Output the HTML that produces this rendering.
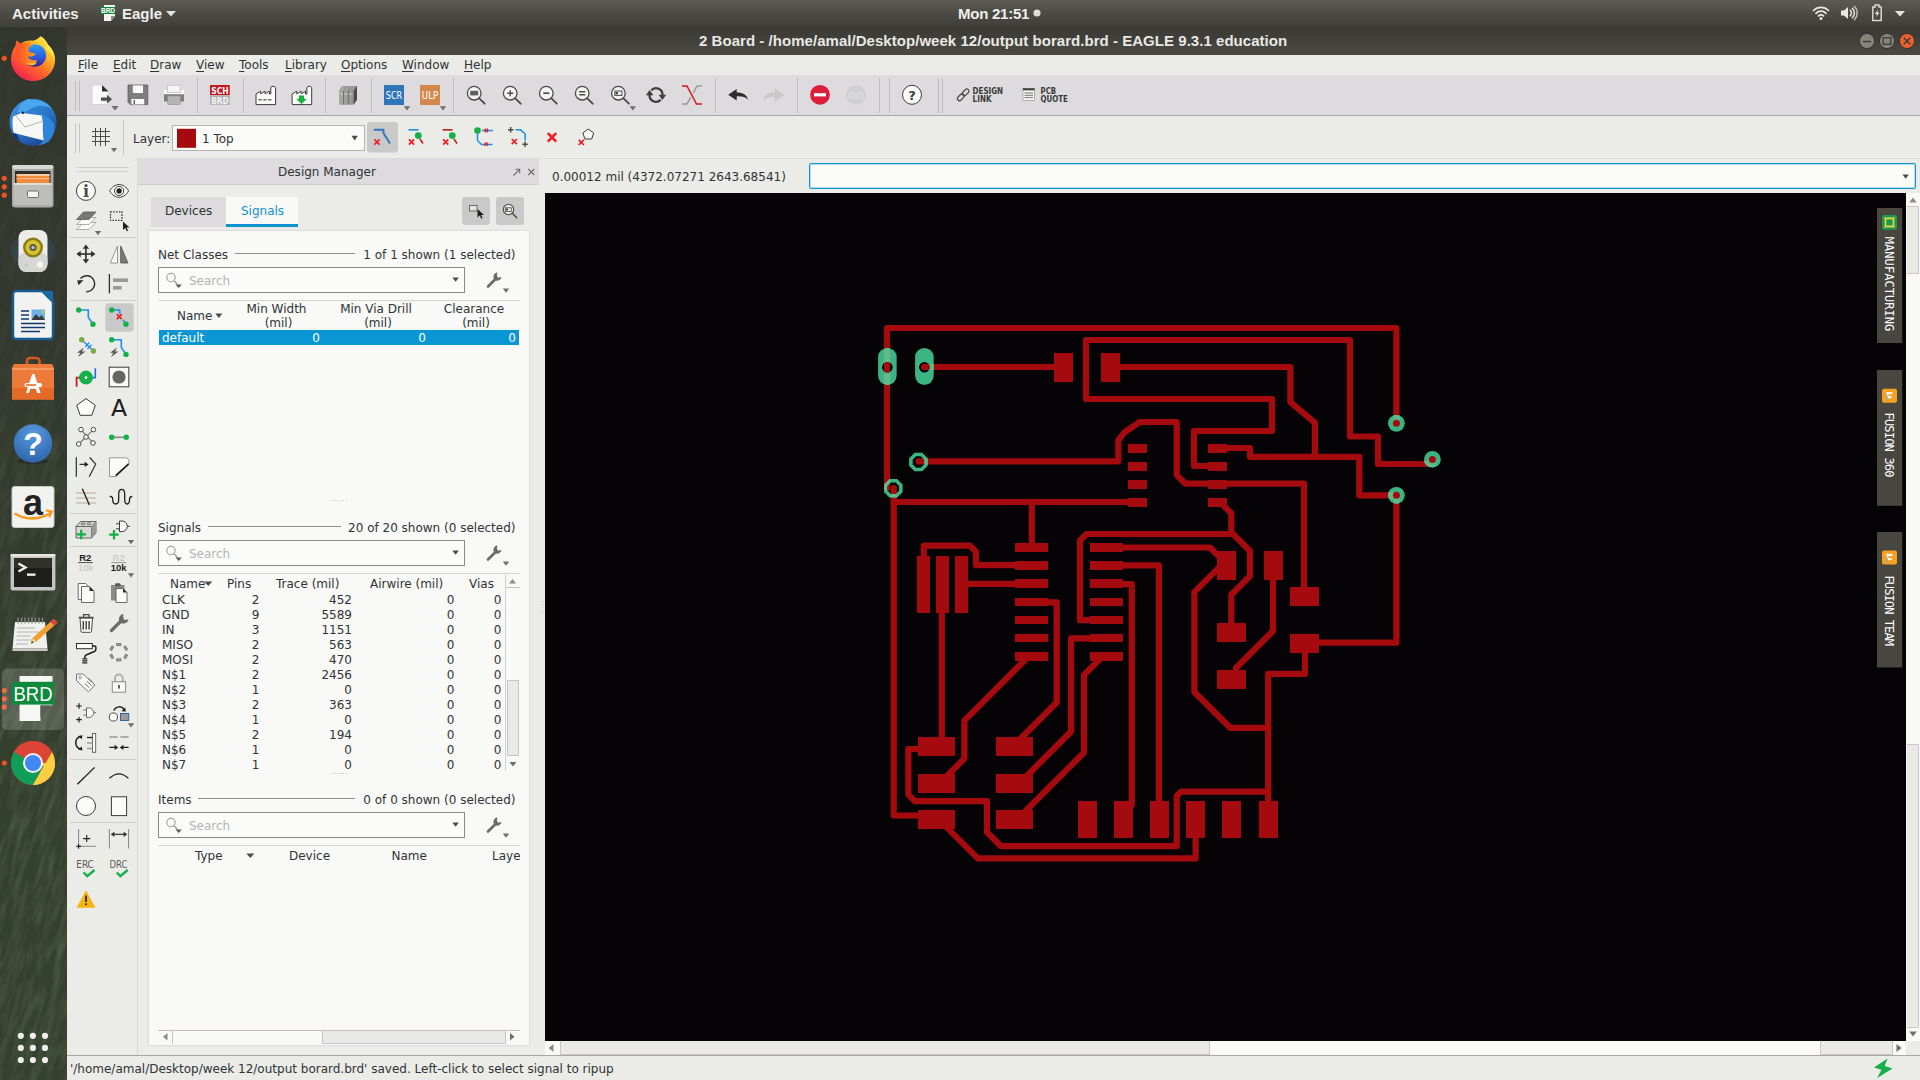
<!DOCTYPE html>
<html lang="en"><head><meta charset="utf-8"><title>2 Board - EAGLE</title>
<style>
*{box-sizing:border-box;margin:0;padding:0}
html,body{width:1920px;height:1080px;overflow:hidden;background:#ebebe7}
body{position:relative;font-family:"DejaVu Sans","Liberation Sans",sans-serif;font-size:12px;color:#2e3436;line-height:1}
.abs{position:absolute}
.t{position:absolute;white-space:nowrap}
svg{position:absolute;overflow:visible}
#topbar{left:0;top:0;width:1920px;height:27px;background:linear-gradient(#5b5a52 0,#55544c 6px,#4c4b44 13px,#45443e 20px,#403f3a 27px);color:#eeeeec;font-family:"DejaVu Sans","Liberation Sans",sans-serif;font-weight:bold;font-size:14px}
#titlebar{left:67px;top:27px;width:1853px;height:27.5px;background:linear-gradient(#3b3a36 0,#3f3e39 10px,#46453f 20px,#4a4943 28px);color:#e8e8e4;font-weight:bold;font-size:14px}
#dock{left:0;top:27px;width:67px;height:1053px;background:#343a2e;overflow:hidden}
#menubar{left:67px;top:54.5px;width:1853px;height:20.5px;background:#ebebe7}
#menubar span{position:absolute}
#menubar u{text-decoration:underline;text-underline-offset:2px}
#tb1{left:67px;top:75px;width:1853px;height:41px;background:#dddbde;border-bottom:1px solid #a9a8aa}
#tb2{left:67px;top:116px;width:1853px;height:42px;background:#ebebe7}
#tools{left:67px;top:158px;width:71px;height:897px;background:#ebebe7;border-right:1px solid #d9d8da}
#dm{left:138px;top:158px;width:401px;height:897px;background:#ebebe7}
#dmhead{left:0;top:0;width:401px;height:26px;background:#dddbde;border-bottom:1px solid #cfcdd0}
#dmpanel{left:10px;top:72px;width:381px;height:817px;background:#f9f9f7;border:1px solid #dddbde}
#cv{left:545px;top:193px;width:1361px;height:848px;background:#050305;overflow:hidden}
#status{left:67px;top:1055px;width:1853px;height:25px;background:#ebebe7;border-top:1px solid #a9a8a6}
.vsep{position:absolute;width:1px;background:#c4c2c5}
.hdr{position:absolute;color:#2e3436}
.num{position:absolute;text-align:right}
</style></head><body>
<div id="topbar" class="abs">
<span class="t" style="left:12px;top:5px;font:bold 15px 'Liberation Sans',sans-serif">Activities</span>
<svg style="left:101px;top:4px" width="16" height="18" viewBox="0 0 16 18"><path d="M3 1h11v11l-4 5H3z" fill="#f4f4f2"/><path d="M10 17v-5h4z" fill="#8c8c88"/><rect x="0" y="3" width="14" height="7" fill="#0d8a3c"/><text x="7" y="9.2" font-size="6.5" font-weight="bold" fill="#fff" text-anchor="middle" font-family="Liberation Sans,sans-serif">BRD</text></svg>
<span class="t" style="left:122px;top:5px;font:bold 15px 'Liberation Sans',sans-serif">Eagle</span>
<svg style="left:166px;top:11px" width="10" height="6"><path d="M0 0h10L5 5.5z" fill="#e4e4e0"/></svg>
<span class="t" style="left:958px;top:4.5px;font:bold 15px 'Liberation Sans',sans-serif;letter-spacing:-.25px">Mon 21:51</span>
<svg style="left:1033px;top:9px" width="8" height="8"><circle cx="4" cy="4" r="3.6" fill="#deded9"/></svg>
<svg style="left:1811px;top:5px" width="20" height="16" viewBox="0 0 20 16"><g fill="none" stroke="#e8e8e4" stroke-width="1.7" stroke-linecap="round"><path d="M2.5 5.5a10.5 10.5 0 0 1 15 0"/><path d="M5 8.3a7 7 0 0 1 10 0"/><path d="M7.4 11a3.6 3.6 0 0 1 5.2 0"/></g><circle cx="10" cy="13.6" r="1.5" fill="#e8e8e4"/></svg>
<svg style="left:1840px;top:5px" width="18" height="16" viewBox="0 0 18 16"><path d="M1 5.5h3L8 2v12L4 10.5H1z" fill="#e8e8e4"/><g fill="none" stroke="#e8e8e4" stroke-width="1.5" stroke-linecap="round"><path d="M10.2 5.3a3.6 3.6 0 0 1 0 5.4"/><path d="M12.3 3.2a6.6 6.6 0 0 1 0 9.6"/><path d="M14.4 1.3a9.4 9.4 0 0 1 0 13.4" opacity=".75"/></g></svg>
<svg style="left:1871px;top:4px" width="12" height="18" viewBox="0 0 12 18"><path d="M4 1h4v2h2.2v13.5H1.8V3H4z" fill="none" stroke="#d8d8d3" stroke-width="1.5"/><path d="M7.2 5.2 3.8 10h2.2l-1 3.6L8.4 8.6H6.2z" fill="#e8e8e4"/></svg>
<svg style="left:1895px;top:11px" width="10" height="6"><path d="M0 0h10L5 5.5z" fill="#e4e4e0"/></svg>
</div>

<div id="dock" class="abs" style="background:linear-gradient(#32362d 0,#33382e 300px,#333a2e 480px,#343d2e 600px,#34402e 800px,#35412f 1053px)">
<svg style="left:0;top:0" width="67" height="1053" viewBox="0 27 67 1053">
<defs><filter id="grass" x="0" y="0" width="100%" height="100%"><feTurbulence type="fractalNoise" baseFrequency="0.16 0.03" numOctaves="3" seed="7"/><feColorMatrix type="matrix" values="0 0 0 0 0.27  0 0 0 0 0.36  0 0 0 0 0.21  1.5 0 0 0 -0.55"/></filter>
<linearGradient id="gfade" x1="0" y1="0" x2="0" y2="1"><stop offset="0" stop-color="#fff" stop-opacity=".12"/><stop offset=".35" stop-color="#fff" stop-opacity=".35"/><stop offset=".55" stop-color="#fff" stop-opacity="1"/><stop offset="1" stop-color="#fff" stop-opacity="1"/></linearGradient><mask id="gm"><rect x="-200" y="-200" width="1600" height="1600" fill="url(#gfade)" transform="rotate(-18 33 550)"/></mask></defs>
<g mask="url(#gm)"><rect x="-300" y="-100" width="700" height="1400" filter="url(#grass)" transform="rotate(18 33 550)" opacity=".34"/></g>
<g fill="#e95420"><circle cx="4.3" cy="58.3" r="2.6"/><circle cx="4.3" cy="178.3" r="2.6"/><circle cx="4.3" cy="186.8" r="2.6"/><circle cx="4.3" cy="195.2" r="2.6"/><circle cx="4.3" cy="690.6" r="2.6"/><circle cx="4.3" cy="698.8" r="2.6"/><circle cx="4.3" cy="707" r="2.6"/><circle cx="4.3" cy="763" r="2.6"/></g>
<!-- firefox -->
<defs><linearGradient id="ffg" x1=".85" y1=".05" x2=".2" y2=".95"><stop offset="0" stop-color="#fff04a"/><stop offset=".3" stop-color="#ffb627"/><stop offset=".6" stop-color="#ff6a2a"/><stop offset="1" stop-color="#f0204e"/></linearGradient>
<linearGradient id="ffb" x1=".5" y1="0" x2=".5" y2="1"><stop offset="0" stop-color="#2aa0f6"/><stop offset=".55" stop-color="#2a5fe0"/><stop offset="1" stop-color="#3a238e"/></linearGradient>
<linearGradient id="ffh" x1="0" y1=".5" x2="1" y2=".5"><stop offset="0" stop-color="#ff4a2a"/><stop offset="1" stop-color="#ffa31e"/></linearGradient></defs>
<path d="M40.5 36.200c3.8 2.2 6.3 5.3 7.5 8.5 5.5 5 8 11.5 6.8 18.500C53 73.5 44 81 33 81 20.8 81 11 71.3 11 59.200c0-5.2 1.8-10 4.5-13.300l.8-5.4 4.2 3.200c3.5-2.4 8-3.5 12.5-3 3-.800 5.5-2.3 7.5-4.500z" fill="url(#ffg)"/>
<circle cx="34.8" cy="55.5" r="11.3" fill="url(#ffb)"/>
<path d="M16.3 40.500l4.2 3.200c2.2-1 4.5-1.3 6.8-1l3.2-2.2-.600 3.6 3 1.2-3 1.500c-1.5 1.8-1.7 3.7-.800 5.3 2 .900 4.8.600 6.8 1.8-2.2 2.8-5.8 3.3-8.2 2.3 1.2 3 5.2 5 9.5 3.8-3 4.7-10 6.6-15.8 2.8-5.5-3.7-7.3-10.8-5.1-17z" fill="url(#ffh)"/>
<path d="M26.5 62.500c3.5 1.5 7.5 1 10.5-1.300l-1.5 3c-3 2-6.5 1.3-9-1.700z" fill="#ffc42e"/>
<path d="M40.5 36.200c3.8 2.2 6.3 5.3 7.5 8.5 4.5 4 6.8 9.5 6.5 15-1.8-5.5-4.8-9-8.5-10.8.300-4.3-2-8.7-5.5-12.700z" fill="#ffe94a"/>
<!-- thunderbird -->
<defs><linearGradient id="tbg" x1=".2" y1="0" x2=".8" y2="1"><stop offset="0" stop-color="#3a93e0"/><stop offset=".5" stop-color="#2a74c8"/><stop offset="1" stop-color="#1a3f8c"/></linearGradient></defs>
<circle cx="33" cy="122.3" r="23.5" fill="url(#tbg)"/>
<path d="M17.5 112c1.5-6.5 6.5-11.5 11.5-13.200l1.8 1.500c8-1 16.5 2.3 21.5 8.7-6-3.7-12.5-4.2-17.5-2.200l-12.5 6.200z" fill="#4aa6ee"/>
<path d="M13 116.500l8.5-3.5 20.5 2.500c.800 5 1.2 9 .800 13.500l1 11.5-30-7.500c-1.5-4.5-1.8-11.5-.800-16.500z" fill="#f7f7f5"/>
<path d="M15 114.500l10 12.5 17-5.5" fill="none" stroke="#a8a29a" stroke-width=".8"/>
<path d="M41.5 114c4.5 1 9.5 4.5 12.5 10 1.5 6.5-1 13.5-6 18-3 2-6.5 3-9.5 3 2.5-1.5 4.5-3.3 5.5-5.300l-1-11c.400-4.5 0-9-1.5-14.700z" fill="#2d86dc"/>
<path d="M12.5 133l4 1c1 3 2.5 5.5 5 7.5-4-1.3-7.5-4.5-9-8.500z" fill="#14306e"/>
<circle cx="22.8" cy="112.8" r="1.2" fill="#1a1a18"/>
<!-- files -->
<rect x="12" y="165" width="41.5" height="42.5" rx="3" fill="#a9a9a5"/><rect x="12" y="165" width="41.5" height="4" rx="2" fill="#d8d8d4"/>
<rect x="15" y="171" width="35.5" height="13" fill="#2e2e2c"/><rect x="16.5" y="174" width="33" height="10" fill="#f08a3c"/><rect x="16.5" y="174" width="33" height="2" fill="#f7c9a0"/><rect x="16.5" y="178" width="33" height="1.2" fill="#f7b480"/>
<rect x="13.5" y="183" width="38.5" height="22" rx="1.5" fill="#bdbdb9"/><rect x="13.5" y="183" width="38.5" height="2" fill="#deded9"/>
<rect x="27.5" y="191" width="11" height="6.5" rx="1" fill="#f4f4f2" stroke="#6e6e6a" stroke-width="1"/>
<!-- rhythmbox -->
<ellipse cx="33" cy="251" rx="22" ry="17" fill="#3a5a8a" opacity=".28"/>
<rect x="18.5" y="230" width="29" height="42" rx="8" fill="#ecece8"/><rect x="18.5" y="252" width="29" height="20" rx="8" fill="#d6d6d2"/>
<circle cx="33" cy="247.5" r="10" fill="#8a7a1a"/><circle cx="33" cy="247.5" r="7.5" fill="#d8c22c"/><circle cx="33" cy="247.5" r="3.6" fill="#5a5a56"/><circle cx="33" cy="247.5" r="1.6" fill="#c8c8c4"/>
<circle cx="40" cy="264.5" r="3.2" fill="#f4f4f0"/><circle cx="26" cy="265" r="1.5" fill="#c4c4c0"/>
<!-- writer -->
<path d="M16 291h26l11 11v34a3 3 0 0 1-3 3H16a3 3 0 0 1-3-3V294a3 3 0 0 1 3-3z" fill="#f2f2f0" stroke="#1a5a94" stroke-width="2.4"/>
<path d="M42 291h11v11z" fill="#1a6aa8"/>
<g stroke="#123a72" stroke-width="1.7"><path d="M21 311h8M21 315h8M21 319h8M21 323.500h24M21 327.500h24M21 331.500h19"/></g>
<rect x="31.5" y="309.5" width="13.5" height="10.5" fill="#6ab4e8"/><path d="M31.5 320l4.5-6 3 3.5 2.5-2.5 3.5 5z" fill="#3a3a38"/><circle cx="42.5" cy="312" r="1.3" fill="#f4c430"/>
<!-- software -->
<path d="M27 369v-8a3 3 0 0 1 3-3h6.500a3 3 0 0 1 3 3v8" fill="none" stroke="#d85a20" stroke-width="2.6"/>
<path d="M14 364h38l2 4v31.500H12V368z" fill="#ee7a3a"/><path d="M12 368h42v2H12z" fill="#f49a62"/><path d="M12 388h42v11.500H12z" fill="#e56a28"/>
<path d="M26 393l6.2-19h2.200l6.2 19h-3.400l-1.3-4.200h-5.600l-1.3 4.200z" fill="#fff"/><rect x="24.5" y="383" width="17.5" height="4" rx="2" fill="#fff"/><rect x="26" y="384.2" width="10" height="1.6" fill="#e56a28"/>
<!-- help -->
<defs><radialGradient id="hg" cx=".5" cy=".25" r=".8"><stop offset="0" stop-color="#5a9ae0"/><stop offset="1" stop-color="#2a62a8"/></radialGradient></defs>
<ellipse cx="33" cy="461" rx="16" ry="3" fill="#1a1a18" opacity=".4"/>
<circle cx="33" cy="443.5" r="19.3" fill="url(#hg)"/>
<text x="33" y="455" font-size="32" font-weight="bold" fill="#fff" text-anchor="middle" font-family="Liberation Sans,sans-serif">?</text>
<!-- amazon -->
<rect x="12" y="486.5" width="42" height="41" rx="2.5" fill="#f2f2f0" stroke="#c8c8c4" stroke-width="1"/>
<text x="33" y="515" font-size="36" font-weight="bold" fill="#222" text-anchor="middle" font-family="Liberation Sans,sans-serif">a</text>
<path d="M15.5 514c10 6 24 6 35-1" fill="none" stroke="#f79a1e" stroke-width="2.6" stroke-linecap="round"/><path d="M46.5 510.500l5.5 1-2.5 5" fill="none" stroke="#f79a1e" stroke-width="2" stroke-linecap="round"/>
<!-- terminal -->
<rect x="10.6" y="554" width="44.8" height="36.6" rx="2" fill="#c4c4c0"/><rect x="10.6" y="554" width="44.8" height="2.5" fill="#e8e8e4"/>
<rect x="14" y="558" width="38" height="29" fill="#1e1e1c"/><rect x="14" y="558" width="38" height="10" fill="#34342f" opacity=".8"/>
<path d="M18.5 563.500l7 4-7 4" fill="none" stroke="#f4f4f2" stroke-width="2.3"/><rect x="27" y="573.5" width="8.5" height="2.3" fill="#f4f4f2"/>
<!-- gedit -->
<path d="M15 622h30l2.5 26.500h-35z" fill="#f0f0ec"/><path d="M12.5 648.500h35l.3 2.500h-35.600z" fill="#c8c8c4"/>
<g stroke="#b4b4b0" stroke-width="1.1"><path d="M17 628h18M17 632h22M16.5 636h14M16.5 640h20M16 644h12"/></g>
<g fill="none" stroke="#8a8a86" stroke-width="1.3"><path d="M18 617.500v6M21.5 617.500v6M25 617.500v6M28.5 617.500v6M32 617.500v6M35.5 617.500v6M39 617.500v6M42.5 617.500v6"/></g>
<path d="M53.5 619l4 3.5-21 19-5.5 2 1.5-5.500z" fill="#f0a030"/><path d="M53.5 619l4 3.5-3.3 3-4-3.500z" fill="#e0403a"/><path d="M32.5 638l-1.5 5.5 5.5-2z" fill="#e8d0a0"/><path d="M31 643.500l1-2.5 1.5 1.500z" fill="#222"/>
<!-- eagle -->
<rect x="2" y="668.5" width="62" height="61.5" rx="5" fill="#fff" opacity=".16"/>
<path d="M19.5 676h33v29.500l-12 0v15.500h-21z" fill="#f6f6f4"/><path d="M40.5 705.500h12l-12 12z" fill="#5a5f56"/>
<rect x="12" y="681.8" width="42" height="22.8" fill="#0d8a3c"/>
<text x="33" y="700.5" font-size="21" fill="#fff" text-anchor="middle" font-family="Liberation Sans,sans-serif" textLength="39" lengthAdjust="spacingAndGlyphs">BRD</text>
<!-- chrome -->
<circle cx="33" cy="763" r="22" fill="#db4437"/>
<path d="M33 763L13.950 752A22 22 0 0 0 33 785l11-19z" fill="#0f9d58"/>
<path d="M33 763h22a22 22 0 0 1-22 22l0 0 11-19z" fill="#ffcd40"/><path d="M52 752a22 22 0 0 1-19 33l11-19z" fill="#ffcd40"/>
<path d="M13.950 752A22 22 0 0 1 52.050 752H33z" fill="#db4437"/>
<circle cx="33" cy="763" r="10" fill="#f4f4f2"/><circle cx="33" cy="763" r="8" fill="#4285f4"/>
<!-- apps -->
<g fill="#f0f0ec"><circle cx="20.8" cy="1035.8" r="3.1"/><circle cx="32.9" cy="1035.8" r="3.1"/><circle cx="45" cy="1035.8" r="3.1"/><circle cx="20.8" cy="1047.9" r="3.1"/><circle cx="32.9" cy="1047.9" r="3.1"/><circle cx="45" cy="1047.9" r="3.1"/><circle cx="20.8" cy="1060" r="3.1"/><circle cx="32.9" cy="1060" r="3.1"/><circle cx="45" cy="1060" r="3.1"/></g>
</svg></div>

<div id="titlebar" class="abs">
<span class="t" style="left:632px;top:5px;font:bold 15px 'Liberation Sans',sans-serif;letter-spacing:.04px">2 Board - /home/amal/Desktop/week 12/output borard.brd - EAGLE 9.3.1 education</span>
<svg style="left:1791px;top:5px" width="58" height="18" viewBox="0 0 58 18">
<circle cx="9" cy="9" r="7.6" fill="#84837c" stroke="#33322e" stroke-width="1"/><path d="M5 9.5h8" stroke="#3c3b37" stroke-width="1.4"/>
<circle cx="29" cy="9" r="7.6" fill="#84837c" stroke="#33322e" stroke-width="1"/><rect x="25.2" y="5.7" width="7.6" height="6.6" fill="none" stroke="#3c3b37" stroke-width="1.3"/>
<circle cx="49" cy="9" r="7.6" fill="#e8602d" stroke="#33322e" stroke-width="1"/><path d="M45.8 5.8l6.4 6.4M52.2 5.8l-6.4 6.4" stroke="#3c3b37" stroke-width="1.4"/>
</svg>
</div>

<div id="menubar" class="abs" style="font-size:12px">
<span class="t" style="left:11px;top:4px"><u>F</u>ile</span>
<span class="t" style="left:46px;top:4px"><u>E</u>dit</span>
<span class="t" style="left:83px;top:4px"><u>D</u>raw</span>
<span class="t" style="left:129px;top:4px"><u>V</u>iew</span>
<span class="t" style="left:172px;top:4px"><u>T</u>ools</span>
<span class="t" style="left:218px;top:4px"><u>L</u>ibrary</span>
<span class="t" style="left:274px;top:4px"><u>O</u>ptions</span>
<span class="t" style="left:335px;top:4px"><u>W</u>indow</span>
<span class="t" style="left:397px;top:4px"><u>H</u>elp</span>
</div>

<div id="tb1" class="abs"></div>
<svg style="left:0;top:0" width="1920" height="160" viewBox="0 0 1920 160" font-family="DejaVu Sans,sans-serif">
<g stroke="#bebcbf" stroke-width="1" shape-rendering="crispEdges">
<path d="M75.5 81v30M79.5 81v30M197.5 78v35M243.5 78v35M325.5 78v35M371.5 78v35M453.5 78v35M715.5 78v35M797.5 78v35M879.5 78v35M889.5 78v35M938.5 78v35M942.5 78v35"/>
</g>
<!-- new -->
<g transform="translate(92,85)"><path d="M0 0h10l6.5 6.5V19.6H0z" fill="#fafaf8" stroke="#c8c8c6" stroke-width=".6"/><path d="M10 0l6.5 6.5H10z" fill="#2e2e30"/><path d="M9 12.6h6v-2.8l5 4.4-5 4.4v-2.8H9z" fill="#4d4d4a"/></g>
<path d="M111.5 106h7l-3.5 4.5z" fill="#6e6e6c"/>
<!-- save -->
<g transform="translate(128,85)"><path d="M0 0h19.8v19.6H2.4L0 17.2z" fill="#7e7e7e" stroke="#5c5c5c" stroke-width=".8"/><rect x="4.8" y=".4" width="10.2" height="7.6" fill="#fafaf8"/><rect x="3.4" y="14" width="12.8" height="5.4" fill="#fafaf8"/><rect x="5.6" y="15" width="1.4" height="4" fill="#5c5c5c"/></g>
<!-- print -->
<g transform="translate(164,85)"><rect x="3.6" y=".3" width="12.6" height="7" fill="#f6f6f4" stroke="#bdbdbb" stroke-width=".7"/><path d="M0 5h3v3h14V5h3v12H0z" fill="#fafaf8"/><rect x="0" y="9.2" width="20" height="7.4" fill="#7e7e7e"/><rect x="3.8" y="11" width="12.4" height="8.4" fill="#b5b5b5" stroke="#8c8c8a" stroke-width=".6"/></g>
<!-- sch brd -->
<g transform="translate(210,85)"><rect width="19.8" height="10.2" fill="#c9171e"/><rect y="10.2" width="19.8" height="9.6" fill="#b2b2b2"/><text x="9.9" y="8.8" font-size="9.2" font-weight="bold" fill="#fff" text-anchor="middle" textLength="17.5" lengthAdjust="spacingAndGlyphs" font-family="DejaVu Sans Condensed,DejaVu Sans,sans-serif">SCH</text><text x="9.9" y="18.6" font-size="9.2" font-weight="bold" fill="#f4f4f4" text-anchor="middle" textLength="17.5" lengthAdjust="spacingAndGlyphs" font-family="DejaVu Sans Condensed,DejaVu Sans,sans-serif">BRD</text></g>
<!-- cam -->
<g id="fac"><path d="M256 104.6V94l4.6-2.8v2.6l4.4-2.6v2.6l4.4-2.6v2.8h1.4V87.4l1.2-1h2.4l1.2 1v17.2z" fill="#fafaf8" stroke="#3c3c3a" stroke-width="1"/></g>
<path d="M258.4 99.8h3.4M263.2 99.8h3.4M268 99.8h3.4" stroke="#6e6e6c" stroke-width="1.5"/>
<use href="#fac" x="36.1"/>
<path d="M299 95.6h5v3.4h2.8l-5.3 5-5.3-5h2.8z" fill="#16b23e"/>
<!-- library -->
<g transform="translate(339,85.5)"><path d="M0 5.5l3-5h11.5l3.5 0v13.5l-3.2 5H0z" fill="#8d8d8b"/><path d="M14.8 5.5l3.2-5v13.500l-3.2 5z" fill="#4a4a44"/><path d="M0 5.500l3-5h3.600l-2.6 5v13.500H0z" fill="#a6a6a4"/><path d="M5 5.500l2.6-5h3.600l-2.6 5v13.500H5z" fill="#a0a09e"/><path d="M9.8 5.500l2.6-5h3.600l-2.6 5v13.500H9.800z" fill="#9a9a98"/><path d="M4.5 5.500v13.500M9.3 5.500v13.5" stroke="#6a6a68" stroke-width=".8"/><path d="M.5 8.500h3.500M5.3 8.500h3.500M10.2 8.500h3.5" stroke="#cfcfcd" stroke-width="1"/></g>
<!-- scr ulp -->
<rect x="384" y="85" width="20" height="20" fill="#2f76b8"/><text x="394" y="99.3" font-size="10.5" fill="#fff" text-anchor="middle" textLength="16.5" lengthAdjust="spacingAndGlyphs" font-family="DejaVu Sans Condensed,DejaVu Sans,sans-serif">SCR</text>
<path d="M403.8 106.300h6.400l-3.2 4.300z" fill="#6e6e6c"/>
<rect x="420" y="85" width="20" height="20" fill="#d3884c"/><text x="430" y="99.3" font-size="10.5" fill="#fff" text-anchor="middle" textLength="16.5" lengthAdjust="spacingAndGlyphs" font-family="DejaVu Sans Condensed,DejaVu Sans,sans-serif">ULP</text>
<path d="M439.8 106.300h6.400l-3.2 4.300z" fill="#6e6e6c"/>
<!-- zooms -->
<g id="mag" fill="none" stroke="#4a4a46"><circle cx="474.2" cy="93.2" r="6.8" stroke-width="1.3" fill="#f4f4f2"/><path d="M479.3 98.300l5.4 5.4" stroke-width="1.8" stroke-linecap="round"/></g>
<rect x="470.2" y="90.8" width="8" height="4.6" fill="#5e5e5c"/>
<use href="#mag" x="36"/><path d="M507.2 93.200h6M510.2 90.200v6" stroke="#4a4a46" stroke-width="1.4"/>
<use href="#mag" x="72.1"/><path d="M543.3 93.200h6" stroke="#4a4a46" stroke-width="1.6"/>
<use href="#mag" x="108"/><path d="M579.2 91.700h6M579.2 94.700h6" stroke="#4a4a46" stroke-width="1.4"/>
<use href="#mag" x="144.2"/><rect x="614.8" y="91" width="7.2" height="4.4" fill="none" stroke="#4a4a46" stroke-width="1"/><rect x="615.5" y="92" width="2.5" height="2.4" fill="#4a4a46"/>
<path d="M629.6 106.300h6.400l-3.2 4.300z" fill="#6e6e6c"/>
<!-- refresh -->
<g fill="none" stroke="#3e3e3a" stroke-width="2.3"><path d="M651.3 90.3A6.4 6.4 0 0 1 662.4 95.3"/><path d="M660.7 99.7A6.4 6.4 0 0 1 649.6 94.7"/></g>
<path d="M658.6 94.8h7.600l-3.8 5.200z M653.4 95.200h-7.600l3.8-5.200z" fill="#3e3e3a"/>
<!-- X -->
<path d="M682 86h5l9.5 18h5.5" fill="none" stroke="#d6151c" stroke-width="1.5"/><path d="M702 86h-5l-3.8 7.200M690.8 97.200L687 104h-5" fill="none" stroke="#9a9a98" stroke-width="1.5"/>
<!-- undo redo -->
<path d="M728.2 94.800l8.5-5.800v3.600c6 0 10.3 2 11.3 7.2-2.6-2.8-6-3.6-11.3-3.400v4.200z" fill="#2c2c2a"/>
<path d="M783.6 94.800l-8.5-5.800v3.600c-6 0-10.3 2-11.3 7.2 2.6-2.8 6-3.6 11.3-3.400v4.200z" fill="#c9c9c7" stroke="#bdbdbb" stroke-width=".5"/>
<!-- stop go -->
<circle cx="820" cy="94.8" r="9.9" fill="#dc1e3a"/><rect x="814" y="93.2" width="12" height="3.2" fill="#fff"/>
<circle cx="856" cy="94.8" r="9.9" fill="#d0cfd2"/><text x="856" y="98.6" font-size="9.5" font-weight="bold" fill="#dedde0" text-anchor="middle">GO</text>
<!-- help -->
<circle cx="912" cy="94.8" r="9.5" fill="#fbfbf9" stroke="#3a3a38" stroke-width="1"/><text x="912" y="99.8" font-size="13" font-weight="bold" fill="#3a3a38" text-anchor="middle">?</text>
<!-- design link -->
<g fill="none" stroke="#4a4a46" stroke-width="1.3"><rect x="-3.9" y="-2.1" width="7.8" height="4.2" rx="2.1" transform="translate(960.8,97.2) rotate(-45)"/><rect x="-3.9" y="-2.1" width="7.8" height="4.2" rx="2.1" transform="translate(965.6,92.4) rotate(-45)"/></g>
<g font-size="8.2" font-weight="bold" fill="#3a3a38" font-family="DejaVu Sans Condensed,DejaVu Sans,sans-serif"><text x="972.6" y="94.2" textLength="30.5" lengthAdjust="spacingAndGlyphs">DESIGN</text><text x="972.6" y="101.6" textLength="19" lengthAdjust="spacingAndGlyphs">LINK</text>
<text x="1040.6" y="94.2" textLength="15.5" lengthAdjust="spacingAndGlyphs">PCB</text><text x="1040.6" y="101.6" textLength="27.3" lengthAdjust="spacingAndGlyphs">QUOTE</text></g>
<rect x="1023" y="88.5" width="11.5" height="12" fill="#f4f4f2" stroke="#8a8a88" stroke-width=".6"/><rect x="1023" y="88.3" width="11.5" height="2" fill="#3a3a38"/><path d="M1024.5 93h8.500M1024.5 95.300h8.500M1024.5 97.600h8.5" stroke="#6a6a68" stroke-width=".9"/>
</svg>

<div id="tb2" class="abs"></div>
<svg style="left:0;top:0" width="1920" height="160" viewBox="0 0 1920 160">
<g stroke="#c6c5c2" stroke-width="1" shape-rendering="crispEdges"><path d="M75.5 123v30M79.5 123v30M123.5 120v35"/></g>
<g stroke="#4a4a46" stroke-width="1.1" shape-rendering="crispEdges"><path d="M91.5 131.500h18.500M91.5 136.500h18.500M91.5 141.500h18.500M95.5 127.500v18.500M100.5 127.500v18.500M105.5 127.500v18.5"/></g>
<path d="M110.8 148h6.400l-3.2 4.300z" fill="#6e6e6c"/>
<rect x="172.5" y="125.5" width="192" height="25" fill="#fbfbf9" stroke="#b4b3b0"/>
<rect x="177" y="128.8" width="19" height="19" fill="#a50b0e"/>
<path d="M351.5 135.800h6.400l-3.2 4.600z" fill="#4a4a46"/>
<rect x="367" y="122" width="31" height="30.5" rx="3" fill="#c9c9c9"/>
<!-- i1 ripup -->
<path d="M374.5 129.8h9v3.4l6 9.6" fill="none" stroke="#2f78c4" stroke-width="2" stroke-linecap="round" stroke-linejoin="round"/>
<g id="rx" stroke="#ee1c25" stroke-width="1.7"><path d="M374.4 139.400l5.2 5.200M379.6 139.400l-5.2 5.2"/></g>
<!-- i2 -->
<path d="M408.5 129.800h10" stroke="#1e90ee" stroke-width="1.6"/><circle cx="418.3" cy="135.6" r="3.4" fill="#16b04a"/><path d="M420 139l3 4.5" stroke="#c01a1e" stroke-width="1.5"/><use href="#rx" x="34.5" y="0"/>
<!-- i3 -->
<path d="M442.5 129.800h10" stroke="#c01a1e" stroke-width="1.6"/><circle cx="452.3" cy="135.6" r="3.4" fill="#16b04a"/><path d="M454 139l3 4.5" stroke="#c01a1e" stroke-width="1.5"/><use href="#rx" x="68.7" y="0"/>
<!-- i4 -->
<path d="M477.5 133v7.500l4 4h11M482 130.500h11" fill="none" stroke="#1e90ee" stroke-width="1.5"/><circle cx="477.5" cy="130.5" r="3.3" fill="#16b04a"/>
<g stroke="#ee1c25" stroke-width="1.3"><path d="M484.6 128.800l3.4 3.400M488 128.800l-3.4 3.400M484.6 142.400l3.4 3.400M488 142.400l-3.4 3.4"/></g><path d="M483.5 130.500h6M483.5 144.100h6" stroke="#ebebe7" stroke-width="0"/>
<!-- i5 -->
<path d="M515.5 129.800h5l4.7 4.200v6.5" fill="none" stroke="#1e90ee" stroke-width="1.6"/><path d="M508 129.800h5.400M510.7 127.100v5.400M522.4 144.200h5.400M525.1 141.500v5.4" stroke="#4a4a46" stroke-width="1.4"/><use href="#rx" x="137.3" y="-0.4"/>
<!-- i6 -->
<path d="M547.8 133.200l8.4 8.400M556.2 133.200l-8.4 8.4" stroke="#ee1c25" stroke-width="2.6"/>
<!-- i7 -->
<path d="M588.2 129l5.5 4-2 6h-6.800l-2-6z" fill="#fbfbf9" stroke="#3a3a38" stroke-width="1"/><use href="#rx" x="204.3" y="0.4"/>
</svg>
<span class="t" style="left:133px;top:133px">Layer:</span>
<span class="t" style="left:202px;top:133px">1 Top</span>

<div id="tools" class="abs"></div>
<svg style="left:0;top:0" width="140" height="1080" viewBox="0 0 140 1080" font-family="DejaVu Sans,sans-serif">
<defs><g id="gd"><circle r="2.7" fill="#16b04a"/></g><path id="dd" d="M-3.2 0h6.400L0 4.300z" fill="#6e6e6c"/>
<path id="bolt" d="M3 -4.500L-4 .800h3.200L-3 5 4.5 -.500H1z" fill="#5a5a58"/></defs>
<g stroke="#cfcecb" stroke-width="1" shape-rendering="crispEdges"><path d="M77 167.500h52M77 171.500h52M70 237.500h66M70 300.500h66M70 513.500h66M70 546.500h66M70 759.500h66M70 822.500h66"/></g>
<!-- info / eye -->
<circle cx="85.9" cy="190.9" r="9.5" fill="#fbfbf9" stroke="#3a3a38" stroke-width="1"/><text x="86" y="197" font-size="16" font-weight="bold" fill="#4a4a46" text-anchor="middle" font-family="DejaVu Serif,serif">i</text>
<path d="M109.7 190.900c4.5-8.5 14.5-8.5 18.8 0-4.3 8.5-14.3 8.5-18.8 0z" fill="#fbfbf9" stroke="#3a3a38" stroke-width="1"/><circle cx="119.1" cy="190.9" r="4.6" fill="none" stroke="#3a3a38" stroke-width="1"/><circle cx="119.1" cy="190.9" r="2.6" fill="#1e1e1c"/>
<!-- layers / select -->
<path d="M76.5 229.500l7-7h12.500l-7 7z" fill="#fbfbf9" stroke="#9a9a98" stroke-width=".8"/><path d="M76.5 224.500l7-7h12.500l-7 7z" fill="#fbfbf9" stroke="#9a9a98" stroke-width=".8"/><path d="M76.5 219.500l7-7.500h12.500l-7 7.500z" fill="#777775" stroke="#5a5a58" stroke-width=".8"/>
<use href="#dd" x="98" y="231"/>
<rect x="110.5" y="211.8" width="11.5" height="8.5" fill="none" stroke="#3a3a38" stroke-width="1.3" stroke-dasharray="1.6 1.2"/><path d="M123 221.500v8.500l2.2-2 1.6 3.3 1.3-.700-1.6-3.200h3z" fill="#1e1e1c"/>
<!-- move / mirror -->
<g fill="#2e2e2c"><path d="M85.9 244.500l3.2 4.300h-6.400zM85.9 263.500l3.2-4.300h-6.400zM76.4 254l4.3-3.200v6.400zM95.4 254l-4.3-3.200v6.400z"/><rect x="85.1" y="248" width="1.6" height="12"/><rect x="79.9" y="253.2" width="12" height="1.6"/></g>
<path d="M117.5 246v17h-7.200z" fill="#fbfbf9" stroke="#8a8a88" stroke-width=".9"/><path d="M120.7 246v17h7.200z" fill="#777775" stroke="#5a5a58" stroke-width=".9"/>
<!-- rotate / align -->
<path d="M80.5 278.500a8 8 0 1 1 5.8 13.2" fill="none" stroke="#2e2e2c" stroke-width="1.4"/><path d="M77 280.500l6.5-.500-4.8 5.300z" fill="#2e2e2c"/>
<path d="M109.4 274v19.3" stroke="#2e2e2c" stroke-width="1.3"/><rect x="113" y="278.4" width="15" height="3.6" fill="#9a9a98"/><rect x="113" y="286" width="8.6" height="3.6" fill="#9a9a98"/>
<!-- route / ripup -->
<path d="M78.7 310h9.600v7.300l4.7 7" fill="none" stroke="#1e90ee" stroke-width="1.6"/><use href="#gd" x="78.7" y="310"/><use href="#gd" x="93" y="324.3"/>
<rect x="105.3" y="303.3" width="28.4" height="28.4" rx="3" fill="#c9c9c9"/>
<path d="M111.7 310h8v4M123 320l3 4.3" fill="none" stroke="#1e90ee" stroke-width="1.6"/><use href="#gd" x="111.7" y="310"/><use href="#gd" x="126" y="324.3"/><path d="M116.8 314.200l5 5M121.8 314.200l-5 5" stroke="#ee1c25" stroke-width="1.7"/>
<!-- row3 -->
<path d="M81.7 339.700l11.7 11.3" stroke="#1e90ee" stroke-width="1.3"/><path d="M85.3 346.800l4-4.200M87.5 349l4-4.2" stroke="#1e90ee" stroke-width="1.4"/><circle cx="81.7" cy="339.7" r="2.7" fill="#7aa845"/><circle cx="93.4" cy="351" r="2.7" fill="#7aa845"/><use href="#bolt" x="81" y="352"/>
<path d="M111.7 339.700h9.600v7.700l4.7 7" fill="none" stroke="#1e90ee" stroke-width="1.6"/><use href="#gd" x="111.7" y="339.7"/><use href="#gd" x="126" y="354.4"/><use href="#bolt" x="114" y="352"/>
<!-- via / hole -->
<path d="M95.3 368.300v9.300H86" fill="none" stroke="#1e70e0" stroke-width="1.6"/><path d="M76.6 386.700v-9.100H86" fill="none" stroke="#c81a22" stroke-width="1.8"/><circle cx="86" cy="377.6" r="7" fill="#16b04a"/><circle cx="86" cy="377.6" r="1.3" fill="#fbfbf9"/>
<rect x="109.2" y="367.2" width="19.6" height="19.6" fill="#fbfbf9" stroke="#3a3a38" stroke-width="1"/><circle cx="119" cy="377" r="6.6" fill="#666664"/>
<!-- polygon / text -->
<path d="M86 398.600l9.3 6.7-3.5 10h-11.600l-3.5-10z" fill="#fbfbf9" stroke="#3a3a38" stroke-width="1"/>
<text x="119" y="415.6" font-size="23.5" fill="#1e1e1c" text-anchor="middle">A</text>
<!-- ratsnest / airwire -->
<g stroke="#7a7a78" stroke-width="1.2"><path d="M81 429.600l12 13.400M93.4 429.600L78.7 444"/></g><g fill="#fbfbf9" stroke="#3a3a38" stroke-width=".9"><circle cx="81" cy="429.6" r="2.3"/><circle cx="93.4" cy="429.6" r="2.3"/><circle cx="78.7" cy="444" r="2.3"/><circle cx="93" cy="443" r="2.3"/><circle cx="86" cy="437" r="2.3"/></g>
<path d="M111.7 437.300h14.6" stroke="#8a8a88" stroke-width="1.6"/><use href="#gd" x="111.7" y="437.3"/><use href="#gd" x="126.3" y="437.3"/>
<!-- optimize / miter -->
<g fill="none" stroke="#2e2e2c" stroke-width="1.2"><path d="M76.3 457.300v19.400M89.7 457.500l6 6.7-6.5 12.500M79.5 464.400h6"/></g><path d="M88.5 464.400l-3.8-2.600v5.200z" fill="#1e1e1c"/>
<path d="M109.5 457.800h16c2 0 3.4 1.4 3.4 3.400v2.800l-13 12.600h-6.400z" fill="#fbfbf9" stroke="#8a8a88" stroke-width=".9"/><path d="M115.7 475.600l13-11.8" stroke="#1e1e1c" stroke-width="1.7"/>
<!-- split / meander -->
<g stroke="#b4aca2" stroke-width="1.2"><path d="M76 493h20M76 498h20M76 503h20"/></g><path d="M82.3 488.700l7.1 16.3" stroke="#1e1e1c" stroke-width="1.3"/>
<path d="M109.7 496.500c2.5-.200 3 .800 3 3 0 3 .800 4.5 3 4.500s3-1.5 3-4.500v-5.700c0-3 .800-4.5 3-4.500s3 1.5 3 4.500v5.700c0 3 .800 4.5 2.5 4.5 1.8 0 2.3-2 2.3-4.5 0-2 .800-3 2.8-3" fill="none" stroke="#1e1e1c" stroke-width="1.3" transform="translate(0,0) scale(1)"/>
<!-- add part / add gate -->
<path d="M76 526.500l4.5-5h15.500v11.500l-4.5 5H76z" fill="#d8d8d6" stroke="#5a5a58" stroke-width=".9"/><path d="M76 526.500h15.500l4.5-5M91.5 526.500V538" fill="none" stroke="#5a5a58" stroke-width=".9"/><path d="M91.5 526.500l4.5-5v11.500l-4.5 5z" fill="#9a9a98"/><ellipse cx="83" cy="523.8" rx="2" ry="1.1" fill="none" stroke="#5a5a58" stroke-width=".8"/><ellipse cx="89" cy="523.8" rx="2" ry="1.1" fill="none" stroke="#5a5a58" stroke-width=".8"/>
<path d="M76.5 534.400h9.500M81.2 529.700v9.5" stroke="#16b04a" stroke-width="2.3"/>
<path d="M119.5 521h2.500a5.3 5.3 0 0 1 0 10.600h-2.500z" fill="#fbfbf9" stroke="#3a3a38" stroke-width="1"/><path d="M116 523.800h3.500M116 528.800h3.500M127.3 526.300h2.5" stroke="#3a3a38" stroke-width="1"/>
<path d="M109.2 534.700h9.500M114 530v9.5" stroke="#16b04a" stroke-width="2.3"/><use href="#dd" x="131" y="540"/>
<!-- name / value -->
<g font-weight="bold" font-size="9.5" text-anchor="middle" font-family="Liberation Sans,sans-serif"><text x="85.3" y="561" fill="#1e1e1c">R2</text><text x="85.6" y="570.6" fill="#c4c4c2" font-weight="normal">10k</text><text x="118.7" y="561" fill="#c4c4c2" font-weight="normal">R2</text><text x="118.7" y="570.8" fill="#1e1e1c">10k</text></g>
<path d="M78.2 562.600h14.6" stroke="#3a3a38" stroke-width=".9"/><path d="M111.5 562.600h14.6" stroke="#8a8a88" stroke-width=".9"/><use href="#dd" x="131" y="573.3"/>
<!-- copy / paste -->
<g fill="#fbfbf9" stroke="#5a5a58" stroke-width=".9"><path d="M78.2 583.500h7.500l3.5 3.500v12.500h-11z"/><path d="M81.5 586.500h8l4.5 4.500v11.500h-12.500z"/></g><path d="M89.5 586.500l4.5 4.500h-4.500z" fill="#2e2e2c"/>
<rect x="111" y="585" width="13.5" height="15.5" fill="#8a8a88"/><rect x="115" y="583.2" width="5.5" height="3" rx="1" fill="#5a5a58"/><path d="M116 588.500h7l4 4v10h-11z" fill="#fbfbf9" stroke="#5a5a58" stroke-width=".9"/><path d="M123 588.500l4 4h-4z" fill="#2e2e2c"/>
<!-- delete / wrench -->
<path d="M80 618h12.500l-1 13.500a1 1 0 0 1-1 .800h-8.500a1 1 0 0 1-1-.800z" fill="#fbfbf9" stroke="#4a4a46" stroke-width="1"/><path d="M78.7 617.500h15M83.5 617v-2.300h5.500v2.3" fill="none" stroke="#4a4a46" stroke-width="1.3"/><path d="M83.3 621v8.500M86.2 621v8.500M89.1 621v8.5" stroke="#3a3a38" stroke-width="1.4"/>
<path d="M111.5 630.500l10.8-10.8" stroke="#6a6a68" stroke-width="3.2" stroke-linecap="round"/><path d="M122.8 614.500a5 5 0 0 0-2.3 7.7 5 5 0 0 0 7.3-2.200l-3.3.700-2-2.300z" fill="#6a6a68" stroke="#6a6a68" stroke-width="1.2" stroke-linejoin="round"/>
<!-- paint / array -->
<rect x="76.5" y="643.5" width="15.8" height="5.2" fill="#fbfbf9" stroke="#2e2e2c" stroke-width="1"/><path d="M92.3 646h2.300c1 0 1.3.600 1.3 1.500v1.500c0 1.2-.500 2-1.5 2.500l-7.8 3.300c-1.2.500-1.8 1.2-1.8 2.500v1" fill="none" stroke="#1e1e1c" stroke-width="1.5"/><path d="M82.3 658.800h5M82.3 660.800h5M82.3 662.800h5" stroke="#1e1e1c" stroke-width="1.3"/>
<g fill="#9a9a98" stroke="#6a6a68" stroke-width=".7"><rect x="116.7" y="643.5" width="4.2" height="2.2"/><rect x="116.7" y="658.8" width="4.2" height="2.2"/><rect x="-2.1" y="-1.1" width="4.2" height="2.2" transform="translate(111.8,648.2) rotate(-60)"/><rect x="-2.1" y="-1.1" width="4.2" height="2.2" transform="translate(125.7,648.2) rotate(60)"/><rect x="-2.1" y="-1.1" width="4.2" height="2.2" transform="translate(111.8,656.4) rotate(60)"/><rect x="-2.1" y="-1.1" width="4.2" height="2.2" transform="translate(125.7,656.4) rotate(-60)"/></g>
<!-- tag / lock -->
<path d="M76.5 674h6.500l12 11-6.5 6.8-12-11z" fill="#fbfbf9" stroke="#7a7a78" stroke-width="1"/><circle cx="80" cy="677.5" r="1.4" fill="none" stroke="#7a7a78" stroke-width=".8"/><path d="M83.5 680.500l6-3M85.5 683l6-3M87.5 685.500l5-2.5" stroke="#6a6a68" stroke-width=".9" transform="rotate(70 87.5 683)"/>
<path d="M115 682v-3.500a3.9 3.9 0 0 1 7.8 0v3.5" fill="none" stroke="#b0b0ae" stroke-width="2"/><rect x="112.3" y="681.8" width="13.3" height="10.4" fill="#fbfbf9" stroke="#8a8a88" stroke-width="1"/><rect x="118.2" y="685" width="1.6" height="3.6" fill="#3a3a38"/>
<!-- gateswap / replace -->
<path d="M86.5 707.800h2.300a4.9 4.9 0 0 1 0 9.800h-2.300z" fill="#fbfbf9" stroke="#6a6a68" stroke-width="1"/><path d="M83.3 710h3.200M83.3 715h3.200M93.7 712.700h2.3" stroke="#6a6a68" stroke-width="1"/><path d="M76.2 706h5.600M79 703.200v5.600M76.2 719.700h5.600M79 716.900v5.6" stroke="#1e1e1c" stroke-width="1.2"/>
<circle cx="113.4" cy="717" r="4.1" fill="#fbfbf9" stroke="#3a3a38" stroke-width=".9"/><rect x="120.5" y="713.5" width="8.3" height="7" fill="#9a9a98" stroke="#2a5aa0" stroke-width=".9"/><path d="M113.8 710.500a6 6 0 0 1 10.5-1" fill="none" stroke="#1e1e1c" stroke-width="1.5"/><path d="M126 711.500l-4.5-.300 3.5-3.700z" fill="#1e1e1c"/><use href="#dd" x="131" y="723.2"/>
<!-- pinswap / -->
<rect x="92.5" y="733.5" width="3.2" height="18.8" fill="#fbfbf9" stroke="#5a5a58" stroke-width=".9"/><path d="M87 737.500h5.5" stroke="#1e1e1c" stroke-width="1.3"/><path d="M87 743h5.500M87 748.500h5.5" stroke="#9a9a98" stroke-width="1.3"/><path d="M80.5 736.500a6.5 6.5 0 0 0 0 12.5" fill="none" stroke="#1e1e1c" stroke-width="1.5"/><path d="M78 736l4.5-.800-.800 4zM78 749.600l4.5.800-.800-4z" fill="#1e1e1c"/>
<path d="M109.4 737h8.200M120.4 737h8.2" stroke="#9a9a98" stroke-width="1.3"/><path d="M109.4 747.400h6M128.6 747.400h-6" stroke="#1e1e1c" stroke-width="1.3"/><path d="M118.2 747.400l-3.6-2.600v5.200zM119.8 747.400l3.6-2.600v5.200z" fill="#1e1e1c"/>
<!-- line / arc -->
<path d="M77.4 784.300l17.2-16.9" stroke="#1e1e1c" stroke-width="1.3"/><path d="M109.4 778.300q9.5-9 19 0" fill="none" stroke="#1e1e1c" stroke-width="1.2"/>
<!-- circle / rect -->
<circle cx="86" cy="806" r="9.5" fill="#fbfbf9" stroke="#3a3a38" stroke-width="1"/><rect x="111.4" y="796.8" width="15.2" height="18.8" fill="#fbfbf9" stroke="#3a3a38" stroke-width="1"/>
<!-- mark / dimension -->
<path d="M78.6 829v17.300h17.4" fill="none" stroke="#7a7a78" stroke-width=".9"/><path d="M83.2 838.600h7M86.7 835.100v7M76.3 846.400h4.600M78.6 844.100v4.6" stroke="#1e1e1c" stroke-width="1.1"/>
<path d="M109.4 829v19.600M128.6 829v19.6" stroke="#7a7a78" stroke-width=".9"/><path d="M113 834.300h12" stroke="#2e2e2c" stroke-width="1.2"/><path d="M110.8 834.300l3.6-2.600v5.200zM127.2 834.300l-3.6-2.600v5.200z" fill="#2e2e2c"/>
<!-- erc drc -->
<g font-size="10.5" fill="#5a5a58" font-family="DejaVu Sans Condensed,DejaVu Sans,sans-serif"><text x="76.3" y="867.7" textLength="17.5" lengthAdjust="spacingAndGlyphs">ERC</text><text x="109.4" y="867.7" textLength="18" lengthAdjust="spacingAndGlyphs">DRC</text></g>
<path d="M83.5 872.500l3.7 3.7 7.3-6.2" fill="none" stroke="#16b04a" stroke-width="2.4"/><path d="M116.7 872.500l3.7 3.7 7.3-6.2" fill="none" stroke="#16b04a" stroke-width="2.4"/>
<!-- warning -->
<path d="M86 890.300l9.4 17.400H76.600z" fill="#f5b50e"/><rect x="85.2" y="895.5" width="1.7" height="6.5" fill="#1e1e1c"/><circle cx="86" cy="904.3" r="1" fill="#1e1e1c"/>
</svg>

<div id="dm" class="abs"></div>
<div class="abs" style="left:138px;top:158px;width:401px;height:27px;background:#dddbde;border-bottom:1px solid #d0ced1"></div>
<span class="t" style="left:278px;top:166px">Design Manager</span>
<svg style="left:510px;top:166px" width="28" height="12" viewBox="510 166 28 12"><g fill="none" stroke="#6e6e6c" stroke-width="1.1"><path d="M513.5 175.500l6-6M515.5 169.300h4.200v4.2"/><path d="M528.3 169l6 6M534.3 169l-6 6"/></g></svg>
<div class="abs" style="left:151px;top:197px;width:75px;height:30px;background:#dddbde"></div>
<div class="abs" style="left:226px;top:197px;width:72px;height:30px;background:#f9f9f7;border-bottom:3px solid #0d93d2"></div>
<span class="t" style="left:165px;top:205px">Devices</span>
<span class="t" style="left:241px;top:205px;color:#0d93d2">Signals</span>
<div class="abs" style="left:462px;top:197px;width:28px;height:28px;background:#c9c9c9;border-radius:3px"></div>
<div class="abs" style="left:496px;top:197px;width:28px;height:28px;background:#c9c9c9;border-radius:3px"></div>
<svg style="left:462px;top:197px" width="64" height="28" viewBox="462 197 64 28"><rect x="469.5" y="205.5" width="7.5" height="5.5" fill="#e4e4e2" stroke="#6a6a68" stroke-width="1"/><path d="M477.5 209v8.500l2.2-2 1.6 3.3 1.3-.700-1.6-3.200h3z" fill="#1e1e1c"/><circle cx="508.5" cy="209.5" r="5.2" fill="#e8e8e6" stroke="#4a4a46" stroke-width="1.1"/><path d="M512.3 213.300l4.5 4.5" stroke="#4a4a46" stroke-width="1.5" stroke-linecap="round"/><rect x="505.5" y="207.8" width="5.8" height="3.6" fill="none" stroke="#4a4a46" stroke-width=".8"/><rect x="506" y="208.5" width="2" height="2" fill="#4a4a46"/></svg>
<div class="abs" style="left:148px;top:230px;width:382px;height:816px;background:#f9f9f7;border:1px solid #dddbde"></div>
<span class="t" style="left:158px;top:249px">Net Classes</span>
<div class="abs" style="left:235px;top:253px;width:120px;height:1px;background:#8e8e8c"></div>
<span class="t" style="right:1404.5px;top:249px">1 of 1 shown (1 selected)</span>
<div class="abs" style="left:158px;top:267px;width:307px;height:26px;background:#fbfbf9;border:1px solid #8a8a88"></div>
<svg style="left:164px;top:271px" width="20" height="18" viewBox="0 0 20 18"><circle cx="7" cy="6.5" r="4.2" fill="none" stroke="#9a9a98" stroke-width="1.1"/><path d="M10 9.700l3.5 3.8" stroke="#9a9a98" stroke-width="1.3"/><path d="M11.5 13.500h6.400l-3.2 3.600z" fill="#5a5a58"/></svg>
<span class="t" style="left:189px;top:275px;color:#b4b4b2">Search</span>
<svg style="left:452px;top:277px" width="8" height="6"><path d="M.4 .5h6.400l-3.2 4.300z" fill="#4a4a46"/></svg>
<svg style="left:484px;top:269px" width="28" height="26" viewBox="0 0 28 26"><path d="M4 17.500l8.5-8.5" stroke="#6a6a68" stroke-width="2.6" stroke-linecap="round"/><path d="M12.8 3.800a4.3 4.3 0 0 0-2 6.7 4.3 4.3 0 0 0 6.3-1.900l-2.8.600-1.8-2z" fill="#6a6a68" stroke="#6a6a68" stroke-width="1" stroke-linejoin="round"/><path d="M18.8 19.500h6.400l-3.2 4.300z" fill="#6e6e6c"/></svg>
<div class="abs" style="left:158px;top:300px;width:362px;height:1px;background:#d4d4d2"></div>
<span class="t" style="left:177px;top:310px">Name</span>
<svg style="left:215px;top:313px" width="8" height="6"><path d="M.3 .5h7l-3.5 4.500z" fill="#4a4a46"/></svg>
<span class="t" style="left:216.5px;width:120px;text-align:center;top:303px">Min Width</span>
<span class="t" style="left:218.5px;width:120px;text-align:center;top:317px">(mil)</span>
<span class="t" style="left:316px;width:120px;text-align:center;top:303px">Min Via Drill</span>
<span class="t" style="left:318px;width:120px;text-align:center;top:317px">(mil)</span>
<span class="t" style="left:414px;width:120px;text-align:center;top:303px">Clearance</span>
<span class="t" style="left:416px;width:120px;text-align:center;top:317px">(mil)</span>
<div class="abs" style="left:159px;top:330px;width:360px;height:15px;background:#0a95d5"></div>
<span class="t" style="left:162px;top:332px;color:#fff">default</span>
<span class="t" style="right:1600px;top:332px;color:#fff">0</span>
<span class="t" style="right:1494px;top:332px;color:#fff">0</span>
<span class="t" style="right:1404px;top:332px;color:#fff">0</span>
<div class="abs" style="left:331px;top:500px;width:18px;height:1px;background:repeating-linear-gradient(90deg,#c4c4c2 0 1px,transparent 1px 3px)"></div>
<div class="abs" style="left:331px;top:773px;width:18px;height:1px;background:repeating-linear-gradient(90deg,#c4c4c2 0 1px,transparent 1px 3px)"></div>
<span class="t" style="left:158px;top:522px">Signals</span>
<div class="abs" style="left:208px;top:526px;width:133px;height:1px;background:#8e8e8c"></div>
<span class="t" style="right:1404.5px;top:522px">20 of 20 shown (0 selected)</span>
<div class="abs" style="left:158px;top:540px;width:307px;height:26px;background:#fbfbf9;border:1px solid #8a8a88"></div>
<svg style="left:164px;top:544px" width="20" height="18" viewBox="0 0 20 18"><circle cx="7" cy="6.5" r="4.2" fill="none" stroke="#9a9a98" stroke-width="1.1"/><path d="M10 9.700l3.5 3.8" stroke="#9a9a98" stroke-width="1.3"/><path d="M11.5 13.500h6.400l-3.2 3.600z" fill="#5a5a58"/></svg>
<span class="t" style="left:189px;top:548px;color:#b4b4b2">Search</span>
<svg style="left:452px;top:550px" width="8" height="6"><path d="M.4 .5h6.400l-3.2 4.300z" fill="#4a4a46"/></svg>
<svg style="left:484px;top:542px" width="28" height="26" viewBox="0 0 28 26"><path d="M4 17.500l8.5-8.5" stroke="#6a6a68" stroke-width="2.6" stroke-linecap="round"/><path d="M12.8 3.800a4.3 4.3 0 0 0-2 6.7 4.3 4.3 0 0 0 6.3-1.900l-2.8.600-1.8-2z" fill="#6a6a68" stroke="#6a6a68" stroke-width="1" stroke-linejoin="round"/><path d="M18.8 19.500h6.400l-3.2 4.300z" fill="#6e6e6c"/></svg>
<div class="abs" style="left:158px;top:573px;width:362px;height:1px;background:#d4d4d2"></div>
<span class="t" style="left:170px;top:578px">Name</span>
<svg style="left:204px;top:581px" width="9" height="6"><path d="M.3 .5h8l-4 4.600z" fill="#4a4a46"/></svg>
<span class="t" style="left:227px;top:578px">Pins</span>
<span class="t" style="left:276px;top:578px">Trace (mil)</span>
<span class="t" style="left:370px;top:578px">Airwire (mil)</span>
<span class="t" style="left:469px;top:578px">Vias</span>
<span class="t" style="left:162px;top:594px">CLK</span>
<span class="t" style="right:1660.5px;top:594px">2</span>
<span class="t" style="right:1568px;top:594px">452</span>
<span class="t" style="right:1465.5px;top:594px">0</span>
<span class="t" style="right:1418.5px;top:594px">0</span>
<span class="t" style="left:162px;top:609px">GND</span>
<span class="t" style="right:1660.5px;top:609px">9</span>
<span class="t" style="right:1568px;top:609px">5589</span>
<span class="t" style="right:1465.5px;top:609px">0</span>
<span class="t" style="right:1418.5px;top:609px">0</span>
<span class="t" style="left:162px;top:624px">IN</span>
<span class="t" style="right:1660.5px;top:624px">3</span>
<span class="t" style="right:1568px;top:624px">1151</span>
<span class="t" style="right:1465.5px;top:624px">0</span>
<span class="t" style="right:1418.5px;top:624px">0</span>
<span class="t" style="left:162px;top:639px">MISO</span>
<span class="t" style="right:1660.5px;top:639px">2</span>
<span class="t" style="right:1568px;top:639px">563</span>
<span class="t" style="right:1465.5px;top:639px">0</span>
<span class="t" style="right:1418.5px;top:639px">0</span>
<span class="t" style="left:162px;top:654px">MOSI</span>
<span class="t" style="right:1660.5px;top:654px">2</span>
<span class="t" style="right:1568px;top:654px">470</span>
<span class="t" style="right:1465.5px;top:654px">0</span>
<span class="t" style="right:1418.5px;top:654px">0</span>
<span class="t" style="left:162px;top:669px">N$1</span>
<span class="t" style="right:1660.5px;top:669px">2</span>
<span class="t" style="right:1568px;top:669px">2456</span>
<span class="t" style="right:1465.5px;top:669px">0</span>
<span class="t" style="right:1418.5px;top:669px">0</span>
<span class="t" style="left:162px;top:684px">N$2</span>
<span class="t" style="right:1660.5px;top:684px">1</span>
<span class="t" style="right:1568px;top:684px">0</span>
<span class="t" style="right:1465.5px;top:684px">0</span>
<span class="t" style="right:1418.5px;top:684px">0</span>
<span class="t" style="left:162px;top:699px">N$3</span>
<span class="t" style="right:1660.5px;top:699px">2</span>
<span class="t" style="right:1568px;top:699px">363</span>
<span class="t" style="right:1465.5px;top:699px">0</span>
<span class="t" style="right:1418.5px;top:699px">0</span>
<span class="t" style="left:162px;top:714px">N$4</span>
<span class="t" style="right:1660.5px;top:714px">1</span>
<span class="t" style="right:1568px;top:714px">0</span>
<span class="t" style="right:1465.5px;top:714px">0</span>
<span class="t" style="right:1418.5px;top:714px">0</span>
<span class="t" style="left:162px;top:729px">N$5</span>
<span class="t" style="right:1660.5px;top:729px">2</span>
<span class="t" style="right:1568px;top:729px">194</span>
<span class="t" style="right:1465.5px;top:729px">0</span>
<span class="t" style="right:1418.5px;top:729px">0</span>
<span class="t" style="left:162px;top:744px">N$6</span>
<span class="t" style="right:1660.5px;top:744px">1</span>
<span class="t" style="right:1568px;top:744px">0</span>
<span class="t" style="right:1465.5px;top:744px">0</span>
<span class="t" style="right:1418.5px;top:744px">0</span>
<span class="t" style="left:162px;top:759px">N$7</span>
<span class="t" style="right:1660.5px;top:759px">1</span>
<span class="t" style="right:1568px;top:759px">0</span>
<span class="t" style="right:1465.5px;top:759px">0</span>
<span class="t" style="right:1418.5px;top:759px">0</span>
<div class="abs" style="left:505px;top:574px;width:15px;height:197px;background:#f9f9f7;border-left:1px solid #d0d0ce"></div>
<div class="abs" style="left:506px;top:587px;width:14px;height:1px;background:#c9bfb8"></div>
<div class="abs" style="left:507px;top:680px;width:12px;height:76px;background:#e9e9e6;border:1px solid #c4c4c8"></div>
<svg style="left:508px;top:578px" width="10" height="192" viewBox="0 0 10 192"><path d="M1 5.500h7L4.5 1z" fill="#8a8a88"/><path d="M1.5 184h7L5 188.500z" fill="#6e6e6c"/></svg>
<span class="t" style="left:158px;top:794px">Items</span>
<div class="abs" style="left:198px;top:798px;width:157px;height:1px;background:#8e8e8c"></div>
<span class="t" style="right:1404.5px;top:794px">0 of 0 shown (0 selected)</span>
<div class="abs" style="left:158px;top:812px;width:307px;height:26px;background:#fbfbf9;border:1px solid #8a8a88"></div>
<svg style="left:164px;top:816px" width="20" height="18" viewBox="0 0 20 18"><circle cx="7" cy="6.5" r="4.2" fill="none" stroke="#9a9a98" stroke-width="1.1"/><path d="M10 9.700l3.5 3.8" stroke="#9a9a98" stroke-width="1.3"/><path d="M11.5 13.500h6.400l-3.2 3.600z" fill="#5a5a58"/></svg>
<span class="t" style="left:189px;top:820px;color:#b4b4b2">Search</span>
<svg style="left:452px;top:822px" width="8" height="6"><path d="M.4 .5h6.400l-3.2 4.300z" fill="#4a4a46"/></svg>
<svg style="left:484px;top:814px" width="28" height="26" viewBox="0 0 28 26"><path d="M4 17.500l8.5-8.5" stroke="#6a6a68" stroke-width="2.6" stroke-linecap="round"/><path d="M12.8 3.800a4.3 4.3 0 0 0-2 6.7 4.3 4.3 0 0 0 6.3-1.900l-2.8.600-1.8-2z" fill="#6a6a68" stroke="#6a6a68" stroke-width="1" stroke-linejoin="round"/><path d="M18.8 19.500h6.400l-3.2 4.300z" fill="#6e6e6c"/></svg>
<div class="abs" style="left:158px;top:845px;width:362px;height:1px;background:#d4d4d2"></div>
<span class="t" style="left:195px;top:850px">Type</span>
<svg style="left:246px;top:853px" width="9" height="6"><path d="M.3 .5h8l-4 4.600z" fill="#4a4a46"/></svg>
<span class="t" style="left:289px;top:850px">Device</span>
<span class="t" style="left:391.500px;top:850px">Name</span>
<div class="abs" style="left:492px;top:847px;width:27.500px;height:18px;overflow:hidden"><span class="t" style="left:0;top:3px">Layer</span></div>
<div class="abs" style="left:158px;top:1030px;width:362px;height:1px;background:#c9bfb8"></div>
<div class="abs" style="left:172px;top:1031px;width:1px;height:13px;background:#c4c4c2"></div>
<div class="abs" style="left:322px;top:1031px;width:184px;height:13px;background:#e9e9e6;border:1px solid #c4c4c8;border-top:none"></div>
<svg style="left:160px;top:1031px" width="360" height="12" viewBox="160 1031 360 12"><path d="M167.5 1033v7.500l-4.5-3.750z" fill="#8a8a88"/><path d="M510 1033v7.500l4.5-3.750z" fill="#6e6e6c"/></svg>
<div class="abs" id="sepline" style="left:539px;top:158px;width:1381px;height:1px;background:#dfdedb"></div>
<span class="t" style="left:552px;top:171px">0.00012 mil (4372.07271 2643.68541)</span>
<div class="abs" style="left:809px;top:163px;width:1107px;height:26px;background:#fbfbf9;border:1px solid #0d93d2;border-radius:2px;box-shadow:inset 0 0 0 1px #b8def0"></div>
<svg style="left:1902px;top:174px" width="8" height="6"><path d="M.5 .5h6.400l-3.200 4.300z" fill="#4a4a46"/></svg>
<div class="abs" id="vsplit" style="left:542px;top:598px;width:1px;height:18px;background:repeating-linear-gradient(180deg,#c4c4c2 0 1px,transparent 1px 3px)"></div>

<div id="cv" class="abs"><svg id="pcb" style="left:0;top:0" width="1360" height="848" viewBox="545 193 1360 848">
<defs><g id="tr" fill="none" stroke-linejoin="round" stroke-linecap="round">
<polyline points="1396.4,423 1396.4,328 887,328 887,488" stroke-width="6.2"/>
<polyline points="893.7,488 893.7,815.5 925,815.5" stroke-width="6.2"/>
<polyline points="893.7,502 1137,502" stroke-width="6.2"/>
<polyline points="1031.8,502 1031.8,545" stroke-width="6.2"/>
<polyline points="924,367 1060,367" stroke-width="6.2"/>
<polyline points="1432.4,464 1378,464 1378,436.5 1350,436.5 1350,340 1086,340 1086,399 1272,399 1272,431 1194,431 1194,466 1212,466" stroke-width="6.2"/>
<polyline points="1110,367 1290.4,367 1290.4,402.2 1315,422.8 1315,456.8" stroke-width="6.2"/>
<polyline points="1215,448 1250,448 1250,456.8 1359.3,456.8 1359.3,495.3 1396,495.3" stroke-width="6.2"/>
<polyline points="1396.4,495.3 1396.4,642.7 1305,642.7" stroke-width="6.2"/>
<polyline points="1305,645 1305,673.8 1268.2,673.8 1268.2,805" stroke-width="6.2"/>
<polyline points="1195.6,835 1195.6,858.4 977.8,858.4 941,821.6" stroke-width="6.2"/>
<polyline points="925,749 908.4,749 908.4,794.6 915,801.2 987,801.2 987,832.2 1001,846.2 1176.7,846.2 1176.7,796 1181,791.6 1268.2,791.6" stroke-width="6.2"/>
<polyline points="941.8,610 941.8,740" stroke-width="6.2"/>
<polyline points="923.8,560 923.8,545.6 970,545.6 976,551.6 976,565.2 1020,565.2" stroke-width="6.2"/>
<polyline points="962,583.8 1020,583.8" stroke-width="6.2"/>
<polyline points="1040,602.3 1056.7,602.3 1056.7,702.5 1020,739.2" stroke-width="6.2"/>
<polyline points="1028,657 964.4,720.6 964.4,758.5 945,778" stroke-width="6.2"/>
<polyline points="1095,638.3 1071.1,638.3 1071.1,731.5 1024,778.6" stroke-width="6.2"/>
<polyline points="1101,658 1084,675 1084,752.5 1026,810.5" stroke-width="6.2"/>
<polyline points="1095,620.2 1080,620.2 1080,540.5 1086.5,534 1233,534 1250,551 1250,576 1231.3,594.7 1231.3,626" stroke-width="6.2"/>
<polyline points="1221,503 1231.3,513.3 1231.3,534" stroke-width="6.2"/>
<polyline points="918.6,461.3 1118.3,461.3 1118.3,440.3 1124.2,432.6 1139.7,422 1176.7,422 1176.7,475 1185.4,483.7 1304,483.7 1304,590" stroke-width="6.2"/>
<polyline points="1115,547.5 1210,547.5 1221,558.5" stroke-width="6.2"/>
<polyline points="1222,564.5 1194.4,592.1 1194.4,692 1230.2,727.8 1268.2,727.8" stroke-width="6.2"/>
<polyline points="1115,565.4 1158.9,565.4 1158.9,805" stroke-width="6.2"/>
<polyline points="1115,584.2 1131.8,584.2 1131.8,805" stroke-width="6.2"/>
<polyline points="1273,575 1273,631 1236,668 1236,675" stroke-width="6.2"/>
</g>
<clipPath id="gclip"><rect x="878.1" y="347.9" width="18.6" height="37" rx="9.3"/><rect x="915.1" y="347.9" width="18.6" height="37" rx="9.3"/><polygon points="902.60,492.15 897.15,497.60 889.45,497.60 884.00,492.15 884.00,484.45 889.45,479.00 897.15,479.00 902.60,484.45"/><polygon points="927.70,465.85 922.25,471.30 914.55,471.30 909.10,465.85 909.10,458.15 914.55,452.70 922.25,452.70 927.70,458.15"/><circle cx="1396.4" cy="423.3" r="8.4"/><circle cx="1432.4" cy="459.4" r="8.4"/><circle cx="1396.4" cy="495.3" r="8.4"/></clipPath>
<clipPath id="hclip"><circle cx="887.4" cy="367.3" r="5.3"/><circle cx="924.4" cy="367.3" r="5.3"/><polygon points="899.00,490.66 895.66,494.00 890.94,494.00 887.60,490.66 887.60,485.94 890.94,482.60 895.66,482.60 899.00,485.94"/><polygon points="924.10,464.36 920.76,467.70 916.04,467.70 912.70,464.36 912.70,459.64 916.04,456.30 920.76,456.30 924.10,459.64"/></clipPath></defs>
<use href="#tr" stroke="#a50b0e"/>
<g fill="#a50b0e" shape-rendering="crispEdges">
<rect x="1054" y="353" width="19" height="29"/>
<rect x="1101" y="353" width="19" height="29"/>
<rect x="1128" y="444.3" width="19" height="8.6"/>
<rect x="1208" y="444.3" width="19" height="8.6"/>
<rect x="1128" y="462.1" width="19" height="8.6"/>
<rect x="1208" y="462.1" width="19" height="8.6"/>
<rect x="1128" y="480.2" width="19" height="8.6"/>
<rect x="1208" y="480.2" width="19" height="8.6"/>
<rect x="1128" y="498.3" width="19" height="8.6"/>
<rect x="1208" y="498.3" width="19" height="8.6"/>
<rect x="1015" y="543.2" width="33" height="8.6"/>
<rect x="1090" y="543.2" width="33" height="8.6"/>
<rect x="1015" y="561.33" width="33" height="8.6"/>
<rect x="1090" y="561.33" width="33" height="8.6"/>
<rect x="1015" y="579.46" width="33" height="8.6"/>
<rect x="1090" y="579.46" width="33" height="8.6"/>
<rect x="1015" y="597.59" width="33" height="8.6"/>
<rect x="1090" y="597.59" width="33" height="8.6"/>
<rect x="1015" y="615.72" width="33" height="8.6"/>
<rect x="1090" y="615.72" width="33" height="8.6"/>
<rect x="1015" y="633.85" width="33" height="8.6"/>
<rect x="1090" y="633.85" width="33" height="8.6"/>
<rect x="1015" y="651.98" width="33" height="8.6"/>
<rect x="1090" y="651.98" width="33" height="8.6"/>
<rect x="917.2" y="556" width="12.8" height="57"/>
<rect x="936.2" y="556" width="12.8" height="57"/>
<rect x="955.2" y="556" width="12.8" height="57"/>
<rect x="918" y="737.3" width="37.2" height="18.8"/>
<rect x="996" y="737.3" width="37" height="18.8"/>
<rect x="918" y="774" width="37.2" height="18.8"/>
<rect x="996" y="774" width="37" height="18.8"/>
<rect x="918" y="810" width="37.2" height="18.8"/>
<rect x="996" y="810" width="37" height="18.8"/>
<rect x="1078.2" y="801" width="19" height="37"/>
<rect x="1114" y="801" width="19" height="37"/>
<rect x="1150" y="801" width="19" height="37"/>
<rect x="1186.2" y="801" width="19" height="37"/>
<rect x="1222.2" y="801" width="19" height="37"/>
<rect x="1258.9" y="801" width="19" height="37"/>
<rect x="1217.3" y="551" width="18.7" height="28.8"/>
<rect x="1264.4" y="551" width="18.6" height="28.8"/>
<rect x="1290" y="587.2" width="29" height="18.8"/>
<rect x="1290" y="634" width="29" height="19"/>
<rect x="1217.3" y="623.2" width="28.7" height="18.8"/>
<rect x="1217.3" y="670" width="28.7" height="19"/>
</g>
<g fill="#3cb482"><rect x="878.1" y="347.9" width="18.6" height="37" rx="9.3"/><rect x="915.1" y="347.9" width="18.6" height="37" rx="9.3"/><polygon points="902.60,492.15 897.15,497.60 889.45,497.60 884.00,492.15 884.00,484.45 889.45,479.00 897.15,479.00 902.60,484.45"/><polygon points="927.70,465.85 922.25,471.30 914.55,471.30 909.10,465.85 909.10,458.15 914.55,452.70 922.25,452.70 927.70,458.15"/><circle cx="1396.4" cy="423.3" r="8.4"/><circle cx="1432.4" cy="459.4" r="8.4"/><circle cx="1396.4" cy="495.3" r="8.4"/></g>
<g clip-path="url(#gclip)"><use href="#tr" stroke="#62b98a"/></g>
<g fill="#050305"><circle cx="887.4" cy="367.3" r="5.3"/><circle cx="924.4" cy="367.3" r="5.3"/><polygon points="899.00,490.66 895.66,494.00 890.94,494.00 887.60,490.66 887.60,485.94 890.94,482.60 895.66,482.60 899.00,485.94"/><polygon points="924.10,464.36 920.76,467.70 916.04,467.70 912.70,464.36 912.70,459.64 916.04,456.30 920.76,456.30 924.10,459.64"/></g>
<g clip-path="url(#hclip)"><use href="#tr" stroke="#a50b0e"/></g>
<circle cx="1396.4" cy="423.3" r="3.5" fill="#a50b0e"/>
<circle cx="1432.4" cy="459.4" r="3.5" fill="#a50b0e"/>
<circle cx="1396.4" cy="495.3" r="3.5" fill="#a50b0e"/>
</svg><svg style="left:0;top:0" width="1360" height="848" viewBox="545 193 1360 848">
<g fill="#48473f"><rect x="1877" y="208" width="25.2" height="135"/><rect x="1877" y="370" width="25.2" height="135.8"/><rect x="1877" y="532" width="25.2" height="135.5"/></g>
<rect x="1882" y="215" width="15" height="14.8" rx="2" fill="#1f9a4c"/><rect x="1885.5" y="218.5" width="8" height="7.8" fill="none" stroke="#e8d84a" stroke-width="1.6"/><path d="M1885 217v1.500M1888 217v1.500M1891 217v1.500M1894 217v1.500M1885 226.500v1.500M1888 226.500v1.500M1891 226.500v1.500M1894 226.500v1.5" stroke="#e8d84a" stroke-width="1"/>
<g id="fic"><rect x="1882" y="388.8" width="15" height="14" rx="2" fill="#f6a21e"/><path d="M1886 392h6.500v2.300h-4v1.800h3.200v2.200h-3.200v2.500h-2.500z" fill="#f2f0ea"/><path d="M1886 392l3 9h-3z" fill="#8a6a3a" opacity=".55"/></g>
<use href="#fic" y="161.8"/>
<g font-family="DejaVu Sans Mono,Liberation Mono,monospace" font-size="12" fill="#fff">
<text transform="translate(1885,236.8) rotate(90)" textLength="94.5">MANUFACTURING</text>
<text transform="translate(1885,412.5) rotate(90)" textLength="65">FUSION 360</text>
<text transform="translate(1885,575.5) rotate(90)" textLength="70.5">FUSION TEAM</text></g>
</svg>
</div><div class="abs" style="left:1906px;top:193px;width:14px;height:848px;background:#f9f9f7"></div>
<div class="abs" style="left:1907px;top:206px;width:12px;height:68px;background:#e9e9e6;border:1px solid #cfc6c8;border-left:none"></div>
<div class="abs" style="left:1907px;top:744px;width:12px;height:284px;background:#e9e9e6;border:1px solid #cfc6c8;border-left:none"></div>
<svg style="left:1907px;top:193px" width="13" height="848" viewBox="0 0 13 848"><path d="M2.3 9.500h7.400L6 4.500z" fill="#8a8a88"/><path d="M2.3 838.500h7.400L6 843.500z" fill="#6e6e6c"/></svg>
<div class="abs" style="left:545px;top:1041px;width:1361px;height:14px;background:#f9f9f7"></div>
<div class="abs" style="left:560px;top:1041px;width:650px;height:14px;background:#e9e9e6;border:1px solid #cfc6c8;border-top:none"></div>
<div class="abs" style="left:1820px;top:1041px;width:73px;height:14px;background:#e9e9e6;border:1px solid #cfc6c8;border-top:none"></div>
<svg style="left:545px;top:1041px" width="1361" height="14" viewBox="545 1041 1361 14"><path d="M553.5 1044v8l-5-4z" fill="#8a8a88"/><path d="M1896.5 1044v8l5-4z" fill="#6e6e6c"/></svg>

<div id="status" class="abs"><span class="t" style="left:3px;top:7px">'/home/amal/Desktop/week 12/output borard.brd' saved. Left-click to select signal to ripup</span>
<svg style="left:1805px;top:0.5px" width="24" height="22" viewBox="0 0 24 22"><path d="M15.500 1.500L2 10.500l7.500 2.200-4.300 8.300L20.500 11.500l-7.800-2.400z" fill="#16b04a"/></svg></div>

</body></html>
